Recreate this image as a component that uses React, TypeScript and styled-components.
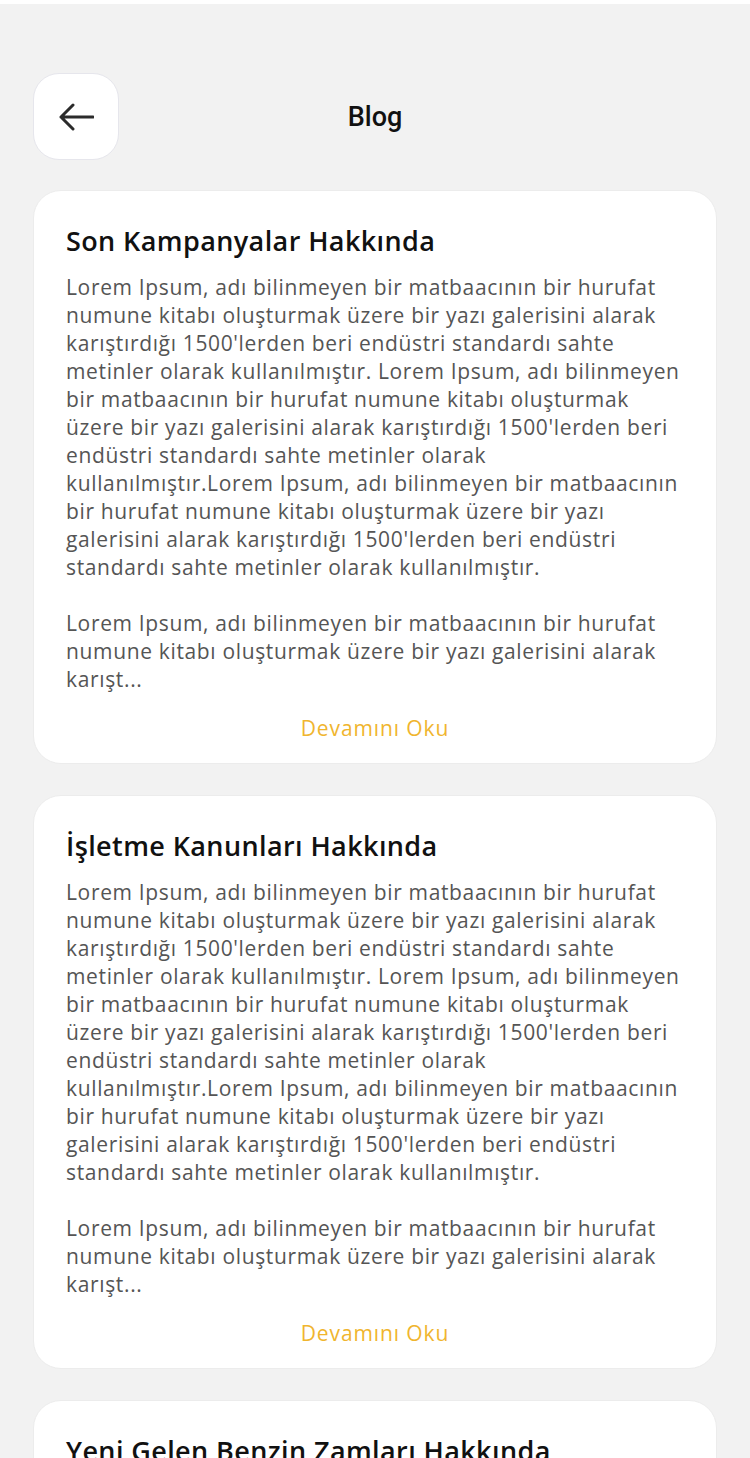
import React from "react";
import styled, { createGlobalStyle } from "styled-components";

const GlobalStyle = createGlobalStyle`
  html, body {
    margin: 0;
    padding: 0;
    background: #f2f2f2;
  }
  * { box-sizing: border-box; }
`;

const Page = styled.div`
  height: 1458px;
  overflow: hidden;
  background: #f2f2f2;
  font-family: "Open Sans", "Noto Sans", sans-serif;
`;

const StatusStrip = styled.div`
  height: 4px;
  background: #ffffff;
`;

const Header = styled.header`
  display: grid;
  grid-template-columns: 86px 1fr 86px;
  align-items: center;
  padding: 69px 33px 0;
`;

const BackButton = styled.button`
  width: 86px;
  height: 87px;
  border-radius: 26px;
  border: 1px solid #e6e6ec;
  background: #ffffff;
  display: flex;
  align-items: center;
  justify-content: center;
  padding: 0;
  cursor: pointer;
`;

const Title = styled.h1`
  margin: 0;
  text-align: center;
  font-family: "Roboto", sans-serif;
  font-weight: 500;
  font-size: 27px;
  color: #111111;
`;

const List = styled.main`
  display: flex;
  flex-direction: column;
  gap: 31px;
  padding: 30px 33px 0;
`;

const Card = styled.article`
  background: #ffffff;
  border: 1px solid #ececec;
  border-radius: 28px;
  padding: 33px 32px 21px;
  display: flex;
  flex-direction: column;
`;

const CardTitle = styled.h2`
  margin: 0 0 15px;
  font-size: 27px;
  line-height: 34px;
  letter-spacing: 0.4px;
  font-weight: 600;
  color: #111111;
`;

const Paragraph = styled.p`
  margin: 0;
  font-size: 21px;
  line-height: 28px;
  letter-spacing: 0.65px;
  color: #555555;
  & + & {
    margin-top: 28px;
  }
`;

const Line = styled.span`
  display: block;
  white-space: nowrap;
`;

const ReadMore = styled.a`
  margin-top: 21px;
  align-self: center;
  font-size: 21px;
  line-height: 28px;
  letter-spacing: 0.9px;
  color: #f0b52e;
  text-decoration: none;
  cursor: pointer;
`;

const body: string[][] = [
  [
    "Lorem Ipsum, adı bilinmeyen bir matbaacının bir hurufat",
    "numune kitabı oluşturmak üzere bir yazı galerisini alarak",
    "karıştırdığı 1500'lerden beri endüstri standardı sahte",
    "metinler olarak kullanılmıştır. Lorem Ipsum, adı bilinmeyen",
    "bir matbaacının bir hurufat numune kitabı oluşturmak",
    "üzere bir yazı galerisini alarak karıştırdığı 1500'lerden beri",
    "endüstri standardı sahte metinler olarak",
    "kullanılmıştır.Lorem Ipsum, adı bilinmeyen bir matbaacının",
    "bir hurufat numune kitabı oluşturmak üzere bir yazı",
    "galerisini alarak karıştırdığı 1500'lerden beri endüstri",
    "standardı sahte metinler olarak kullanılmıştır.",
  ],
  [
    "Lorem Ipsum, adı bilinmeyen bir matbaacının bir hurufat",
    "numune kitabı oluşturmak üzere bir yazı galerisini alarak",
    "karışt...",
  ],
];

const posts = [
  "Son Kampanyalar Hakkında",
  "İşletme Kanunları Hakkında",
  "Yeni Gelen Benzin Zamları Hakkında",
];

const ArrowLeft = () => (
  <svg width="36" height="28" viewBox="0 0 36 28" fill="none">
    <path
      d="M15 2 L3 14 L15 26 M3 14 H35"
      stroke="#2b2b2b"
      strokeWidth="3"
      strokeLinecap="round"
      strokeLinejoin="round"
    />
  </svg>
);

export default function App() {
  return (
    <Page>
      <GlobalStyle />
      <StatusStrip />
      <Header>
        <BackButton aria-label="Geri">
          <ArrowLeft />
        </BackButton>
        <Title>Blog</Title>
        <span />
      </Header>
      <List>
        {posts.map((title) => (
          <Card key={title}>
            <CardTitle>{title}</CardTitle>
            {body.map((para, i) => (
              <Paragraph key={i}>
                {para.map((line, j) => (
                  <Line key={j}>{line}</Line>
                ))}
              </Paragraph>
            ))}
            <ReadMore>Devamını Oku</ReadMore>
          </Card>
        ))}
      </List>
    </Page>
  );
}
